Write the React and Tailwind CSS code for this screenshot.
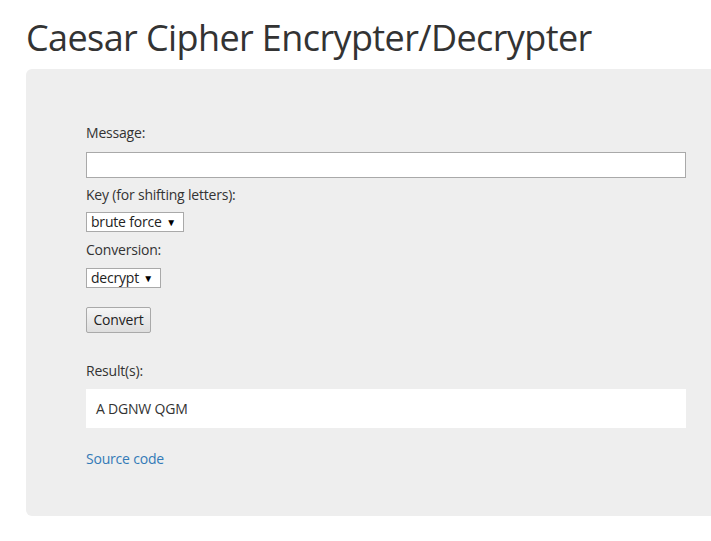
import React from 'react';

// --- Dropdown palsu (tampilan select bawaan browser) ---
const FakeSelect = ({ value, width }) => (
  <div className={`inline-flex items-center justify-between h-[20px] ${width} bg-white border border-[#a9a9a9] pl-[4px] pr-[7px] text-[14px] text-[#222] leading-none`}>
    <span>{value}</span>
    <span className="text-[10px] text-black">▼</span>
  </div>
);

export default function App() {
  return (
    <div className="min-h-screen w-full overflow-hidden bg-white text-[#333] font-['Open_Sans',sans-serif] tracking-[-0.2px]">
      <div className="pl-[26px]">
        <h1 className="mt-[18px] mb-[11px] text-[36px] leading-[1.1] font-normal text-[#333] tracking-[-0.6px]">
          Caesar Cipher Encrypter/Decrypter
        </h1>

        <div className="w-[720px] bg-[#eeeeee] rounded-[6px] pt-[54px] pb-[47px] px-[60px] text-[14px]">
          <div className="leading-[20px]">Message:</div>
          <input
            type="text"
            className="block mt-[9px] w-[600px] h-[26px] bg-white border border-[#a9a9a9] outline-none px-1"
          />

          <div className="mt-[7px] leading-[20px]">Key (for shifting letters):</div>
          <div className="mt-[7px] leading-none">
            <FakeSelect value="brute force" width="w-[98px]" />
          </div>

          <div className="mt-[8px] leading-[20px]">Conversion:</div>
          <div className="mt-[8px] leading-none">
            <FakeSelect value="decrypt" width="w-[75px]" />
          </div>

          <button className="block mt-[19px] h-[26px] w-[65px] rounded-[2px] border border-[#a9a9a9] bg-gradient-to-b from-[#f6f6f6] to-[#dedede] text-[14px] text-[#222]">
            Convert
          </button>

          <div className="mt-[28px] leading-[20px]">Result(s):</div>
          <div className="mt-[8px] w-[600px] h-[39px] bg-white flex items-center px-[10px] text-[#333]">
            A DGNW QGM
          </div>

          <div className="mt-[21px] leading-[20px]">
            <a href="#" className="text-[#337ab7]">Source code</a>
          </div>
        </div>
      </div>
    </div>
  );
}
